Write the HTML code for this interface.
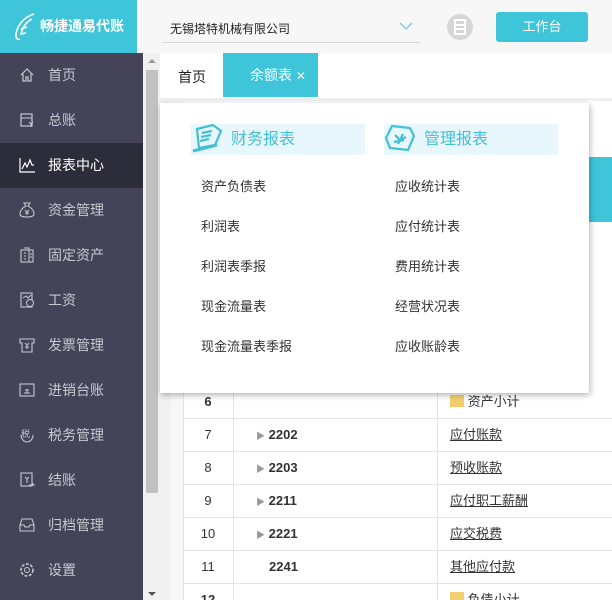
<!DOCTYPE html>
<html><head><meta charset="utf-8"><style>
*{margin:0;padding:0;box-sizing:border-box}
html,body{width:612px;height:600px;overflow:hidden}
body{position:relative;font-family:"Liberation Sans","Noto Sans CJK SC",sans-serif;background:#f0f0f0;font-size:13px;color:#333}
.abs{position:absolute}
#logo{left:0;top:0;width:137px;height:53px;background:#3ec5da;color:#fff;font-size:14px;font-weight:bold;padding:16px 0 0 40px}
#hdr{left:137px;top:0;width:475px;height:53px;background:#f7f7f8}
#side{left:0;top:53px;width:143px;height:547px;background:#444358}
#sb{left:143px;top:53px;width:17px;height:547px;background:#f1f1f1}
.mi{position:absolute;left:0;width:143px;height:45px;color:#c8c8d0;font-size:14px;line-height:45px;padding-left:48px}
.mi svg{position:absolute;left:19px;top:14px}
.mi.sel{background:#2d2c3b;color:#fff}
#tabs{left:160px;top:53px;width:452px;height:45px;background:#fff}
.row{position:absolute;left:183px;width:429px;height:33px;background:#fff;border-bottom:1px solid #e3e3e3}
.row div{position:absolute;top:0;line-height:32px}
#dd{left:160px;top:103px;width:429px;height:290px;background:#fff;box-shadow:1px 2px 6px rgba(0,0,0,.3)}
.sh{position:absolute;top:21px;width:174px;height:31px;background:#e7f7fb;color:#45bfd4;font-size:16px;line-height:31px;padding-left:40px}
.sh svg{position:absolute;left:0;top:0}
.it{position:absolute;font-size:13px;color:#333}
</style></head><body>
<div id="logo" class="abs"><svg class="abs" style="left:12px;top:12px" width="26" height="30" viewBox="0 0 26 30"><path d="M22 2C12 5 4 14 4 24c0 3 2 4 4 3M20 7c-6 3-10 9-11 16M15 15l-6 2M14 21l-5 1" stroke="#fff" stroke-width="1.6" fill="none"/></svg>畅捷通易代账</div>
<div id="hdr" class="abs">
 <div class="abs" style="left:33px;top:20px;font-size:12px;color:#222">无锡塔特机械有限公司</div>
 <div class="abs" style="left:25px;top:42px;width:258px;height:1px;background:#d8d8d8"></div>
 <svg class="abs" style="left:262px;top:22px" width="14" height="9"><path d="M1 1l6 6 6-6" stroke="#7fc8d8" stroke-width="1.3" fill="none"/></svg>
 <div class="abs" style="left:310px;top:14px;width:26px;height:26px;border-radius:50%;background:#d6d6d6"><svg width="26" height="26"><rect x="8" y="6" width="10" height="14" stroke="#fff" stroke-width="2" fill="none"/><path d="M8 11h10M8 15h10" stroke="#fff" stroke-width="2"/></svg></div>
 <div class="abs" style="left:359px;top:12px;width:92px;height:30px;background:#3ec5da;border-radius:3px;color:#fff;text-align:center;line-height:30px;font-size:13px">工作台</div>
</div>
<div id="side" class="abs">
 <div class="mi" style="top:0"><svg width="16" height="16"><path d="M2 8L8 2l6 6M4 7v7h3v-4h2v4h3V7" stroke="#c8c8d0" fill="none" stroke-width="1.2"/></svg>首页</div>
 <div class="mi" style="top:45px"><svg width="16" height="16"><rect x="2" y="2" width="11" height="12" stroke="#c8c8d0" fill="none" stroke-width="1.2"/><path d="M2 6h11M10 10l2 2 2-2M12 12v3" stroke="#c8c8d0" fill="none"/></svg>总账</div>
 <div class="mi sel" style="top:90px"><svg width="16" height="16"><path d="M1 1v14h15M3 12l3-6 2 4 3-7 2 5h2" stroke="#fff" fill="none" stroke-width="1.2"/></svg>报表中心</div>
 <div class="mi" style="top:135px"><svg width="16" height="16"><path d="M5 1h6l-2 3c4 2 6 5 6 8 0 2-2 3-7 3S1 14 1 12c0-3 2-6 6-8z" stroke="#c8c8d0" fill="none" stroke-width="1.1"/><path d="M6 8l2 2 2-2M8 10v3M6 11h4" stroke="#c8c8d0" fill="none"/></svg>资金管理</div>
 <div class="mi" style="top:180px"><svg width="16" height="16"><rect x="2" y="3" width="12" height="12" stroke="#c8c8d0" fill="none" stroke-width="1.1"/><path d="M5 1h5v14M5 6h2M5 9h2M5 12h2M11 7h2M11 10h2" stroke="#c8c8d0" fill="none"/></svg>固定资产</div>
 <div class="mi" style="top:225px"><svg width="16" height="16"><rect x="2" y="1" width="11" height="14" stroke="#c8c8d0" fill="none" stroke-width="1.1"/><circle cx="11" cy="11" r="3.5" stroke="#c8c8d0" fill="#444358"/><path d="M4 6l3-2 2 2 3-3" stroke="#c8c8d0" fill="none"/></svg>工资</div>
 <div class="mi" style="top:270px"><svg width="16" height="16"><path d="M1 2h14v4h-2v9H3V6H1z" stroke="#c8c8d0" fill="none" stroke-width="1.1"/><path d="M6 6l2 2 2-2M8 8v4M6 10h4" stroke="#c8c8d0" fill="none"/></svg>发票管理</div>
 <div class="mi" style="top:315px"><svg width="16" height="16"><rect x="1" y="2" width="14" height="12" stroke="#c8c8d0" fill="none" stroke-width="1.1"/><path d="M5 11h6M8 7v4M6 8h4" stroke="#c8c8d0" fill="none"/></svg>进销台账</div>
 <div class="mi" style="top:360px"><svg width="16" height="16"><path d="M2 8c0 4 3 7 6 7s6-3 6-7" stroke="#c8c8d0" fill="none" stroke-width="1.1"/><text x="2" y="10" font-size="9" fill="#c8c8d0">税</text></svg>税务管理</div>
 <div class="mi" style="top:405px"><svg width="16" height="16"><rect x="2" y="1" width="11" height="13" stroke="#c8c8d0" fill="none" stroke-width="1.1"/><path d="M6 5l2 2 2-2M8 7v4M10 13h5l-2-2" stroke="#c8c8d0" fill="none"/></svg>结账</div>
 <div class="mi" style="top:450px"><svg width="16" height="16"><path d="M3 2h10l2 6v6H1V8z M1 8h4l1 2h4l1-2h4" stroke="#c8c8d0" fill="none" stroke-width="1.1"/></svg>归档管理</div>
 <div class="mi" style="top:495px"><svg width="16" height="16"><circle cx="8" cy="8" r="6" stroke="#c8c8d0" fill="none" stroke-width="1.6" stroke-dasharray="3 1.5"/><circle cx="8" cy="8" r="2.5" stroke="#c8c8d0" fill="none"/></svg>设置</div>
</div>
<div id="sb" class="abs"><div class="abs" style="left:3px;top:17px;width:12px;height:423px;background:#c1c1c1"></div>
<div class="abs" style="left:5px;top:6px;width:0;height:0;border:4px solid transparent;border-bottom-color:#999;border-top:0"></div>
<div class="abs" style="left:5px;top:539px;width:0;height:0;border:4px solid transparent;border-top-color:#555;border-bottom:0"></div></div>
<div id="tabs" class="abs">
 <div class="abs" style="left:18px;top:14px;font-size:14px;color:#222">首页</div>
 <div class="abs" style="left:63px;top:0;width:95px;height:44px;background:#3ec5da;color:#fff;font-size:14px;line-height:44px;padding-left:27px">余额表 <span style="font-size:12px">✕</span></div>
</div>
<div class="abs" style="left:170px;top:101px;width:13px;height:499px;background:#f7f7f7"></div>
<div class="abs" style="left:183px;top:101px;width:429px;height:285px;background:#fff"></div>
<div class="abs" style="left:589px;top:157px;width:23px;height:65px;background:#3ec5da"></div>
<div class="row" style="top:386px"><div style="left:0;width:50px;text-align:center;font-weight:bold">6</div><div style="left:267px"><span style="display:inline-block;width:14px;height:12px;background:#f2cf6e;vertical-align:-1px"></span> 资产小计</div></div>
<div class="row" style="top:419px"><div style="left:0;width:50px;text-align:center">7</div><div style="left:73px;font-weight:bold"><span style="color:#999;font-size:9px">▶</span> 2202</div><div style="left:267px;text-decoration:underline">应付账款</div></div>
<div class="row" style="top:452px"><div style="left:0;width:50px;text-align:center">8</div><div style="left:73px;font-weight:bold"><span style="color:#999;font-size:9px">▶</span> 2203</div><div style="left:267px;text-decoration:underline">预收账款</div></div>
<div class="row" style="top:485px"><div style="left:0;width:50px;text-align:center">9</div><div style="left:73px;font-weight:bold"><span style="color:#999;font-size:9px">▶</span> 2211</div><div style="left:267px;text-decoration:underline">应付职工薪酬</div></div>
<div class="row" style="top:518px"><div style="left:0;width:50px;text-align:center">10</div><div style="left:73px;font-weight:bold"><span style="color:#999;font-size:9px">▶</span> 2221</div><div style="left:267px;text-decoration:underline">应交税费</div></div>
<div class="row" style="top:551px"><div style="left:0;width:50px;text-align:center">11</div><div style="left:86px;font-weight:bold">2241</div><div style="left:267px;text-decoration:underline">其他应付款</div></div>
<div class="row" style="top:584px;height:16px;border:0;overflow:hidden"><div style="left:0;width:50px;text-align:center;font-weight:bold">12</div><div style="left:267px"><span style="display:inline-block;width:14px;height:12px;background:#f2cf6e"></span> 负债小计</div></div>
<div class="abs" style="left:183px;top:386px;width:1px;height:214px;background:#e3e3e3"></div>
<div class="abs" style="left:233px;top:386px;width:1px;height:214px;background:#e3e3e3"></div>
<div class="abs" style="left:437px;top:386px;width:1px;height:214px;background:#e3e3e3"></div>
<div id="dd" class="abs">
 <div class="sh" style="left:31px"><svg width="36" height="31"><g stroke="#45bfd4" stroke-width="2.2" fill="none"><path d="M6 5l16-4 8 6-6 14-16 3z"/><path d="M11 9l10-2M10 13l10-2M9 17l9-2"/><path d="M2 27l24-6" stroke-width="3"/></g></svg>财务报表</div>
 <div class="sh" style="left:224px"><svg width="36" height="31"><g stroke="#45bfd4" stroke-width="2.2" fill="none"><path d="M8 2l18 2 4 8-6 14-18-2-4-10z"/><path d="M11 11l5 5 6-3M14 20l5-10M10 18l10-2"/></g></svg>管理报表</div>
 <div class="it" style="left:41px;top:73px">资产负债表</div>
 <div class="it" style="left:41px;top:113px">利润表</div>
 <div class="it" style="left:41px;top:153px">利润表季报</div>
 <div class="it" style="left:41px;top:193px">现金流量表</div>
 <div class="it" style="left:41px;top:233px">现金流量表季报</div>
 <div class="it" style="left:235px;top:73px">应收统计表</div>
 <div class="it" style="left:235px;top:113px">应付统计表</div>
 <div class="it" style="left:235px;top:153px">费用统计表</div>
 <div class="it" style="left:235px;top:193px">经营状况表</div>
 <div class="it" style="left:235px;top:233px">应收账龄表</div>
</div>
</body></html>
